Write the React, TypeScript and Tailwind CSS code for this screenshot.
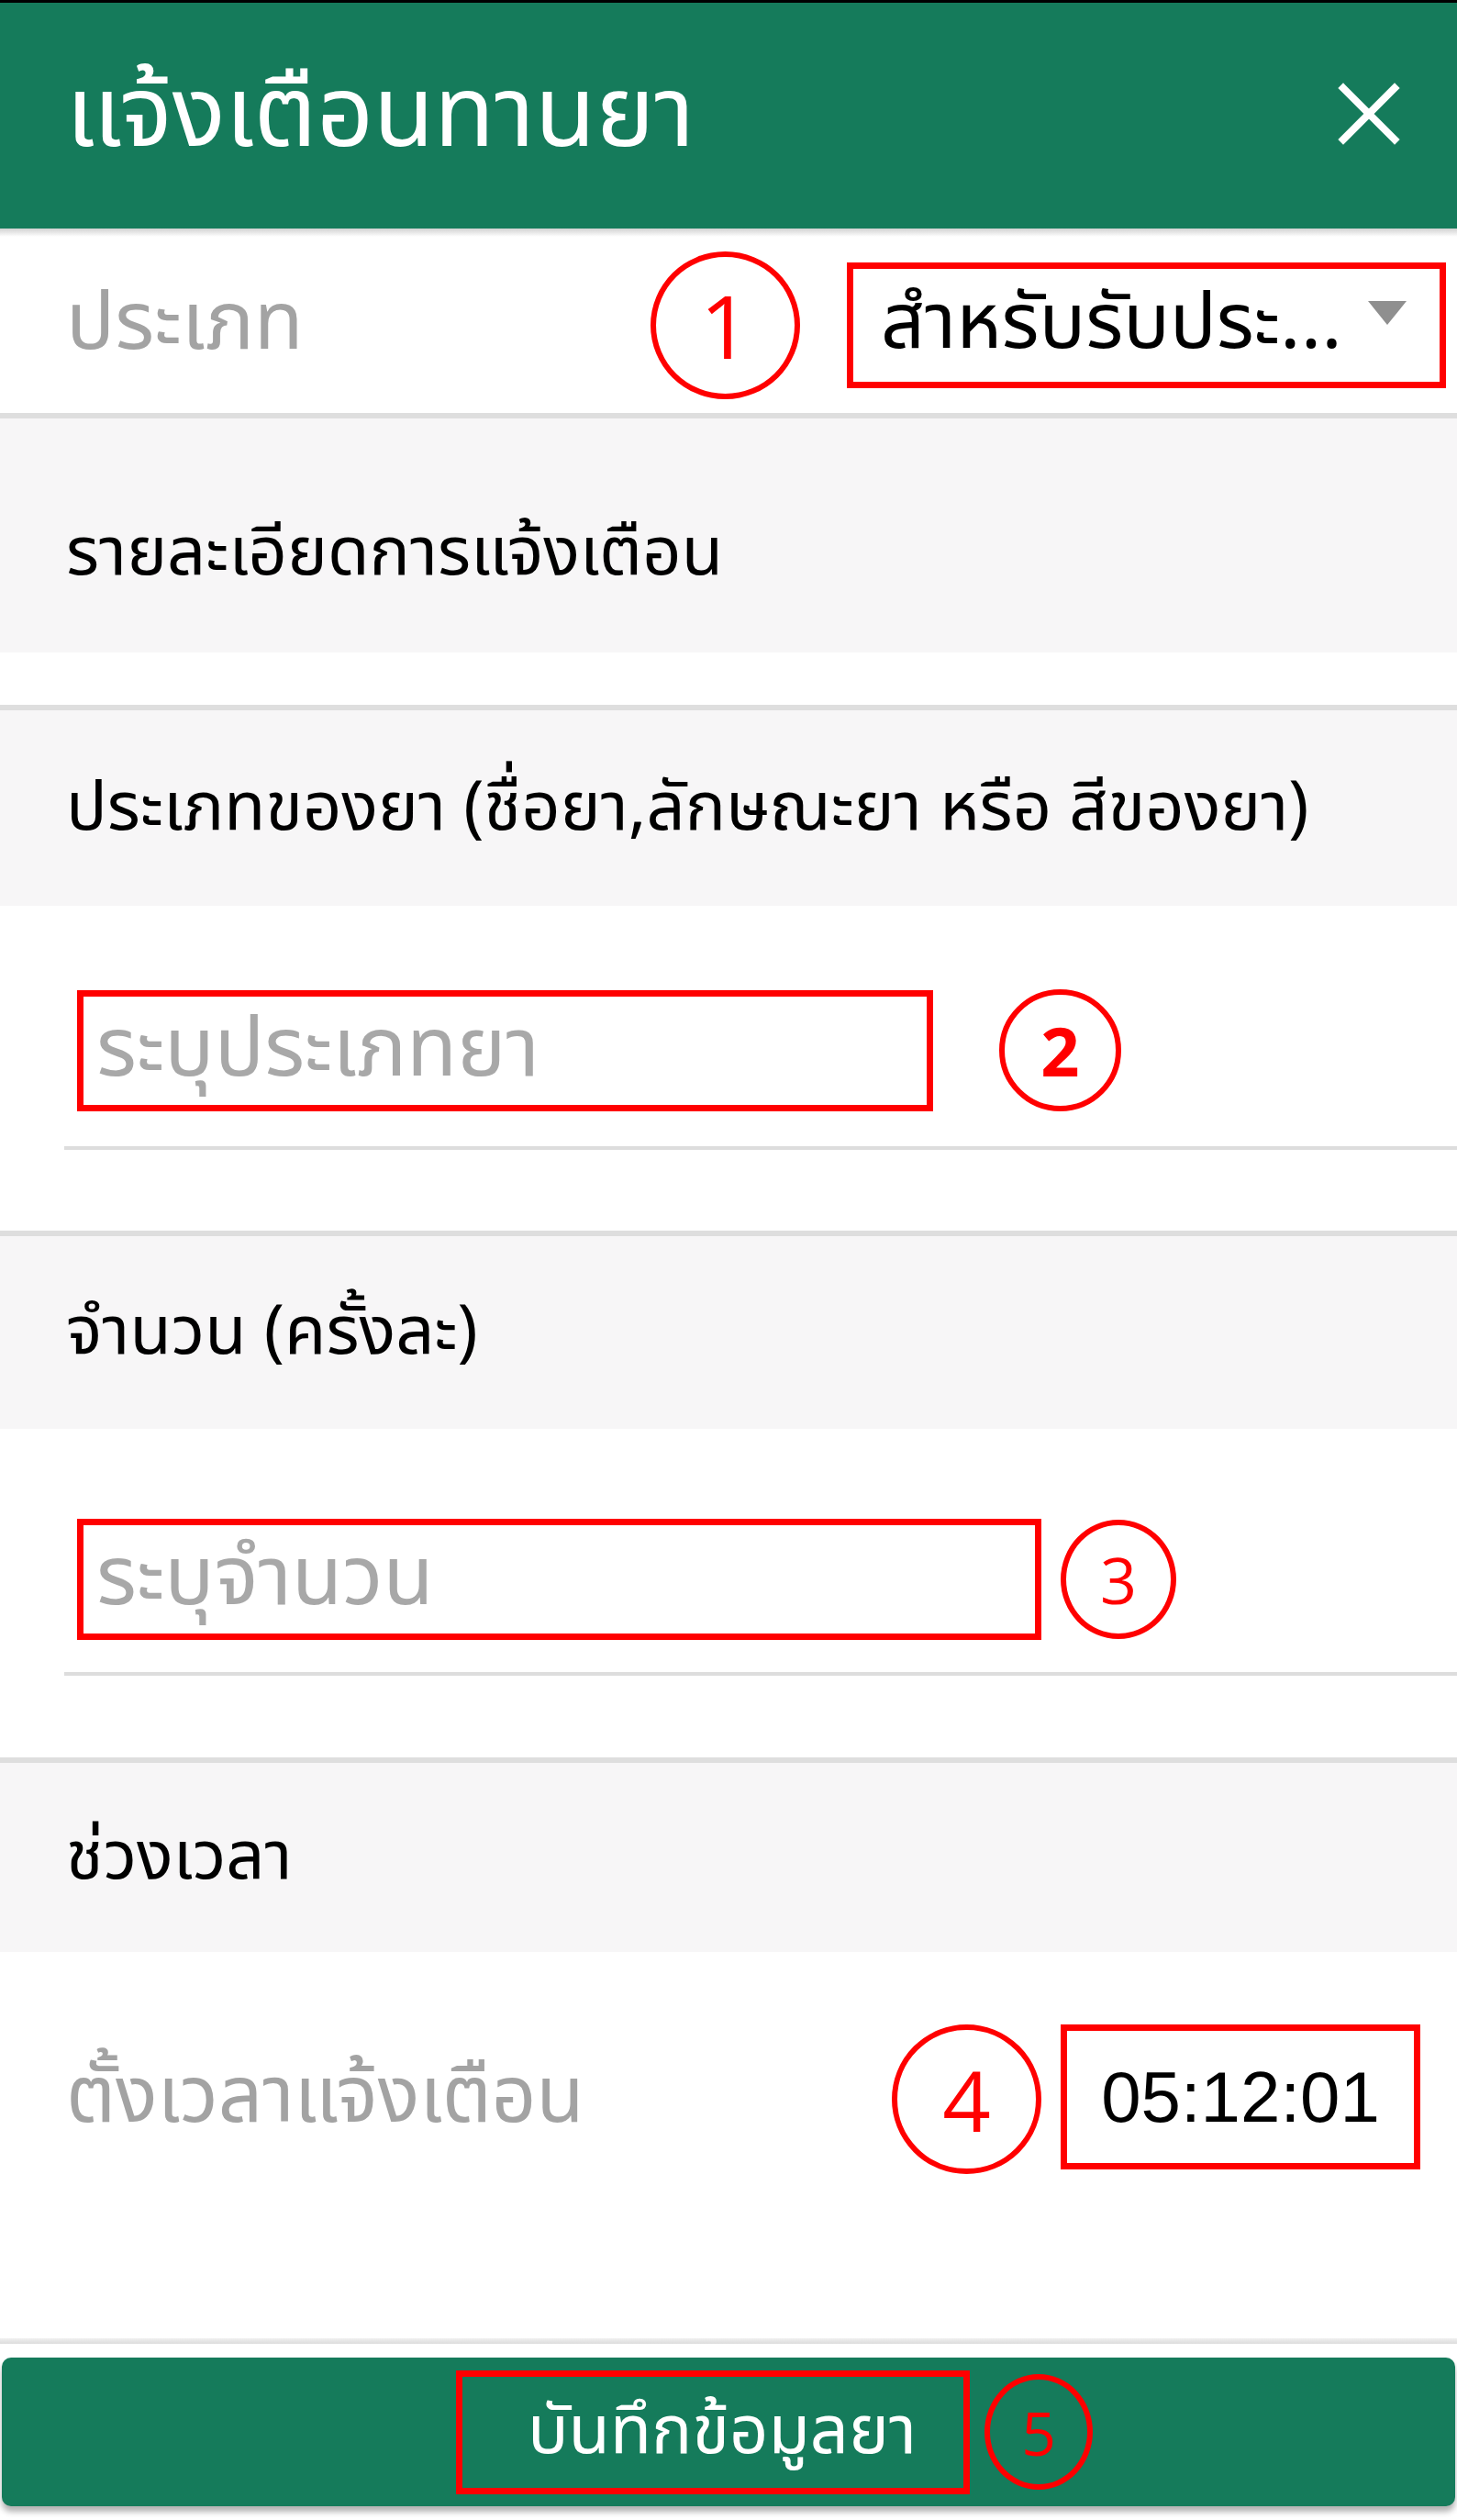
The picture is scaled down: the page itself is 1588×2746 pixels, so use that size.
const thai = { fontFamily: '"Noto Sans Thai", "Noto Sans", "DejaVu Sans", sans-serif' }

function Marker({ n, className, bold }: { n: string; className: string; bold?: boolean }) {
  return (
    <div
      className={`flex shrink-0 items-center justify-center rounded-[50%] border-[6px] border-[#ff0000] text-[#ff0000] ${className}`}
      style={{ fontFamily: '"Open Sans", "Liberation Sans", sans-serif' }}
    >
      <span className={bold ? 'font-bold' : 'font-normal'}>{n}</span>
    </div>
  )
}

function SectionTitle({ children, className }: { children: string; className: string }) {
  return (
    <>
      <div className="h-[6px] shrink-0 bg-[#dedede]" />
      <div className={`flex shrink-0 items-center bg-[#f7f6f7] pl-[72px] text-[74px] leading-none text-black ${className}`}>
        {children}
      </div>
    </>
  )
}

export default function App() {
  return (
    <div className="flex h-[2746px] w-[1588px] flex-col overflow-hidden bg-white" style={thai}>
      <div className="h-[3px] shrink-0 bg-black" />
      {/* header */}
      <div className="flex h-[246px] shrink-0 items-center justify-between bg-[#157b5b] pl-[72px] pr-[62px]">
        <h1 className="text-[108px] font-normal leading-none text-white">แจ้งเตือนทานยา</h1>
        <svg width="68" height="68" viewBox="0 0 68 68" className="mt-[-4px]">
          <path d="M6 6 L62 62 M62 6 L6 62" stroke="white" strokeWidth="8" strokeLinecap="square" />
        </svg>
      </div>
      <div className="h-[9px] shrink-0 bg-gradient-to-b from-[#d2d2d2] to-white" />

      {/* ประเภท */}
      <div className="flex h-[192px] shrink-0 items-center pl-[72px] pr-[12px]">
        <span className="text-[88px] leading-none text-[#a3a3a3]">ประเภท</span>
        <Marker n="1" className="ml-auto h-[161px] w-[163px] text-[96px]" />
        <div className="ml-[51px] flex h-[137px] w-[653px] items-center border-[7px] border-[#ff0000] pl-[30px] pr-[36px]">
          <span className="text-[84px] leading-none text-black">สำหรับรับประ...</span>
          <svg width="42" height="28" viewBox="0 0 42 28" className="ml-auto mt-[-24px] shrink-0">
            <path d="M0 0 H42 L21 26 Z" fill="#8f8f8f" />
          </svg>
        </div>
      </div>

      <SectionTitle className="h-[255px] bg-[#f4f4f4] pt-[38px]">รายละเอียดการแจ้งเตือน</SectionTitle>
      <div className="h-[57px] shrink-0" />

      <SectionTitle className="h-[213px]">ประเภทของยา (ชื่อยา,ลักษณะยา หรือ สีของยา)</SectionTitle>
      <div className="flex h-[354px] shrink-0 flex-col pl-[70px]">
        <div className="mt-[91px] flex items-center">
          <div className="ml-[14px] flex h-[132px] w-[933px] items-center border-[7px] border-[#ff0000] pl-[14px]">
            <span className="text-[90px] leading-none text-[#a8a8a8]">ระบุประเภทยา</span>
          </div>
          <Marker n="2" bold className="ml-[72px] h-[133px] w-[133px] text-[74px]" />
        </div>
        <div className="mt-[38px] h-[4px] bg-[#dddddd]" />
      </div>

      <SectionTitle className="h-[210px]">จำนวน (ครั้งละ)</SectionTitle>
      <div className="flex h-[358px] shrink-0 flex-col pl-[70px]">
        <div className="mt-[98px] flex items-center">
          <div className="ml-[14px] flex h-[132px] w-[1051px] items-center border-[7px] border-[#ff0000] pl-[14px]">
            <span className="text-[90px] leading-none text-[#a8a8a8]">ระบุจำนวน</span>
          </div>
          <Marker n="3" className="ml-[21px] h-[130px] w-[126px] text-[70px]" />
        </div>
        <div className="mt-[35px] h-[4px] bg-[#dddddd]" />
      </div>

      <SectionTitle className="h-[206px]">ช่วงเวลา</SectionTitle>
      <div className="flex h-[421px] shrink-0 items-start pl-[72px] pr-[40px] pt-[79px]">
        <span className="mt-[38px] text-[85px] leading-none text-[#a3a3a3]">ตั้งเวลาแจ้งเตือน</span>
        <Marker n="4" className="ml-auto h-[163px] w-[163px] text-[92px]" />
        <div
          className="ml-[21px] flex h-[158px] w-[392px] items-center justify-center border-[7px] border-[#ff0000] text-[78px] text-black"
          style={{ fontFamily: '"Liberation Sans", Arial, sans-serif' }}
        >
          05:12:01
        </div>
      </div>

      <div className="h-[6px] shrink-0 bg-gradient-to-b from-[#f0f0f0] to-[#dcdcdc]" />
      <div className="h-[15px] shrink-0" />

      {/* save button */}
      <div className="mx-[2px] flex h-[162px] shrink-0 items-center rounded-[10px] bg-[#157b5b] shadow-[0_6px_6px_rgba(0,0,0,0.3)]">
        <div className="ml-[495px] flex h-[135px] w-[560px] items-center justify-center border-[7px] border-[#ff0000] pl-[20px]">
          <span className="text-[74px] leading-none text-white">บันทึกข้อมูลยา</span>
        </div>
        <Marker n="5" className="ml-[16px] h-[126px] w-[118px] text-[66px]" />
      </div>
    </div>
  )
}
